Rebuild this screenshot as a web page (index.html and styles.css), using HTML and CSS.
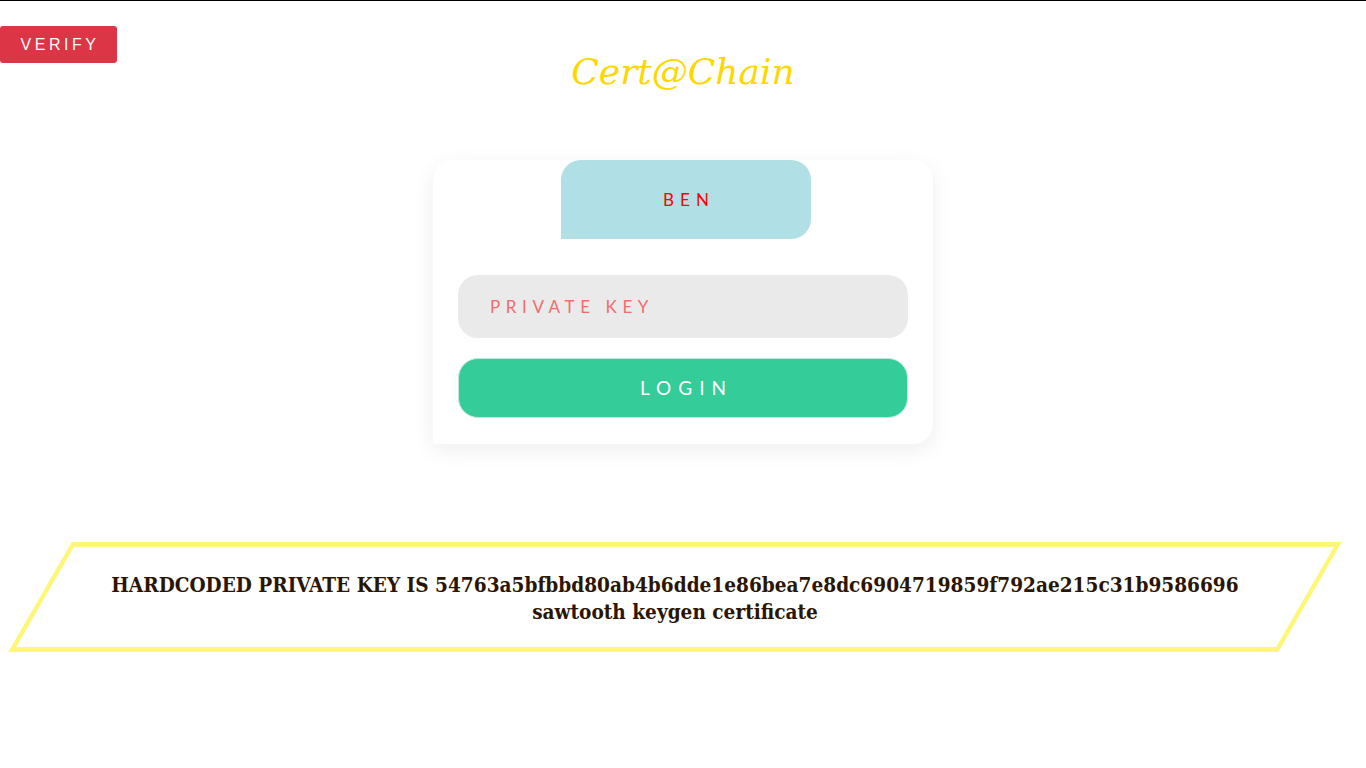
FILE: index.html
```html
<!DOCTYPE html>
<html>
<head>
<meta charset="utf-8">
<title>Cert@Chain</title>
<link rel="stylesheet" href="styles.css">
</head>
<body>
<header class="topbar">
  <button class="verify">VERIFY</button>
  <h1 class="brand">Cert@Chain</h1>
  <span></span>
</header>
<main class="card">
  <div class="tab">BEN</div>
  <form class="form">
    <input class="key" type="text" placeholder="PRIVATE KEY">
    <button class="login" type="button">LOGIN</button>
  </form>
</main>
<section class="note">
  <p>HARDCODED PRIVATE KEY IS 54763a5bfbbd80ab4b6dde1e86bea7e8dc6904719859f792ae215c31b9586696<br>sawtooth keygen certificate</p>
</section>
</body>
</html>
```
FILE: styles.css
```css
html, body {
  margin: 0;
  padding: 0;
  background: #fff;
}
body {
  font-family: "Liberation Sans", Arial, sans-serif;
}
.topbar {
  border-top: 1px solid #000;
  display: grid;
  grid-template-columns: 1fr auto 1fr;
  align-items: start;
}
.verify {
  justify-self: start;
  margin-top: 25px;
  background: #dc3545;
  color: #fff;
  border: 0;
  border-radius: 3px;
  width: 117px;
  height: 37px;
  font-family: "Liberation Sans", Arial, sans-serif;
  font-size: 16px;
  letter-spacing: 3.5px;
  padding: 0 0 0 3px;
}
.brand {
  margin: 47px 0 0;
  font-family: "DejaVu Serif", serif;
  font-style: italic;
  font-weight: normal;
  font-size: 36px;
  line-height: 48px;
  color: #ffd700;
}
.card {
  width: 500px;
  margin: 64px auto 0;
  background: #fff;
  border-radius: 20px 20px 20px 0;
  box-shadow: 0 6px 22px rgba(0, 0, 0, 0.07);
  padding-bottom: 26px;
}
.tab {
  width: 250px;
  height: 79px;
  margin-left: 128px;
  background: #b0dfe5;
  border-radius: 20px 20px 20px 0;
  color: #ff0000;
  font-family: Lato, sans-serif;
  font-size: 17px;
  letter-spacing: 6px;
  display: flex;
  align-items: center;
  justify-content: center;
  padding-left: 6px;
  box-sizing: border-box;
}
.form {
  padding: 36px 25px 0;
  display: flex;
  flex-direction: column;
  gap: 20px;
}
.key {
  height: 63px;
  border: 0;
  border-radius: 20px;
  background: #eaeaea;
  padding: 0 32px;
  font-family: Lato, sans-serif;
  font-size: 17px;
  letter-spacing: 5.6px;
  outline: none;
}
.key::placeholder {
  color: #f26c6c;
}
.login {
  height: 60px;
  border: 1px solid #bfe9d9;
  border-radius: 20px;
  background: #34cc98;
  color: #fff;
  font-family: Lato, sans-serif;
  font-size: 19px;
  letter-spacing: 7px;
  padding: 0 0 2px 7px;
}
.note {
  position: relative;
  width: 1270px;
  box-sizing: border-box;
  margin: 98px 0 0 40px;
  height: 110px;
  padding-top: 3px;
  display: flex;
  align-items: center;
  justify-content: center;
}
.note::before {
  content: "";
  position: absolute;
  inset: 0;
  border: 5px solid #fdf676;
  transform: skewX(-30deg);
}
.note p {
  position: relative;
  margin: 0;
  text-align: center;
  font-family: "DejaVu Serif", serif;
  font-stretch: condensed;
  font-weight: bold;
  font-size: 20.6px;
  line-height: 27px;
  color: #2a1500;
}
```
